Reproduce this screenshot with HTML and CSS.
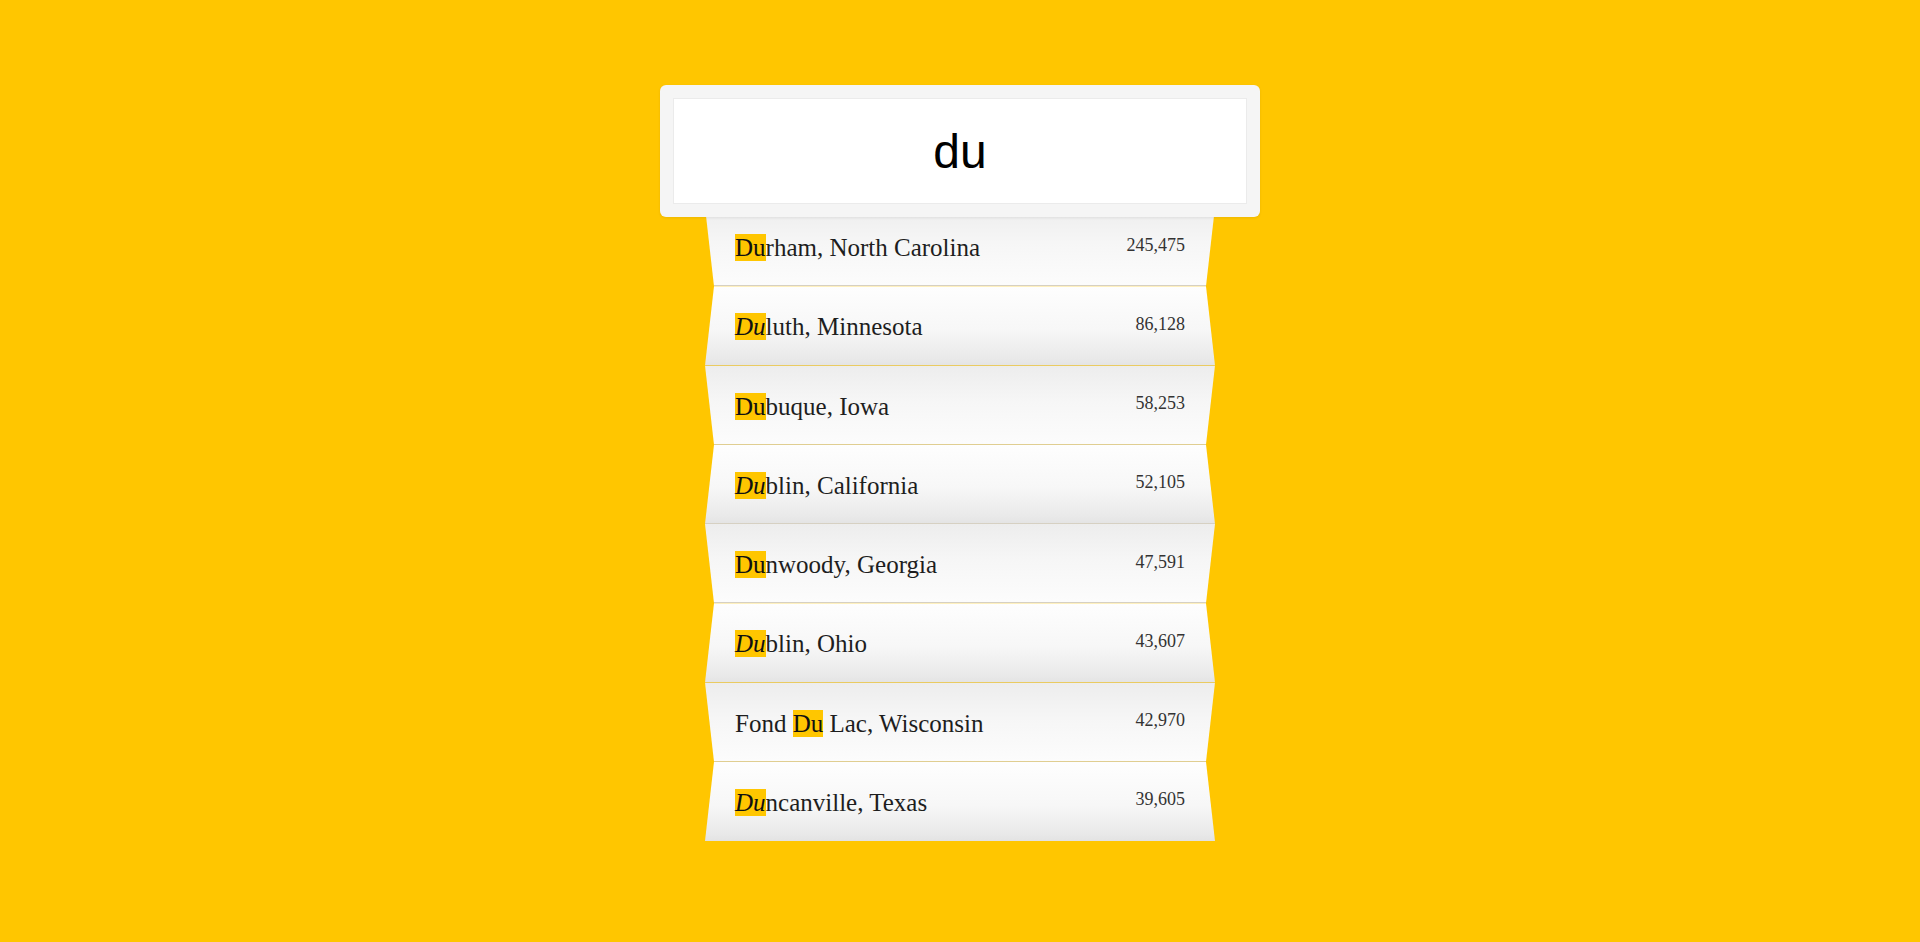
FILE: index.html
```html
<!DOCTYPE html>
<html lang="en">
<head>
<meta charset="utf-8">
<title>City search</title>
<link rel="stylesheet" href="styles.css">
</head>
<body>
<main class="page">
  <div class="search">
    <div class="search-input">du</div>
  </div>
  <ul class="results">
    <li class="row odd"><span class="name"><mark class="hl">Du</mark>rham, North Carolina</span><span class="pop">245,475</span></li>
    <li class="row even"><span class="name"><mark class="hl it">Du</mark>luth, Minnesota</span><span class="pop">86,128</span></li>
    <li class="row odd"><span class="name"><mark class="hl">Du</mark>buque, Iowa</span><span class="pop">58,253</span></li>
    <li class="row even"><span class="name"><mark class="hl it">Du</mark>blin, California</span><span class="pop">52,105</span></li>
    <li class="row odd"><span class="name"><mark class="hl">Du</mark>nwoody, Georgia</span><span class="pop">47,591</span></li>
    <li class="row even"><span class="name"><mark class="hl it">Du</mark>blin, Ohio</span><span class="pop">43,607</span></li>
    <li class="row odd"><span class="name">Fond <mark class="hl">Du</mark> Lac, Wisconsin</span><span class="pop">42,970</span></li>
    <li class="row even"><span class="name"><mark class="hl it">Du</mark>ncanville, Texas</span><span class="pop">39,605</span></li>
  </ul>
</main>
</body>
</html>
```
FILE: styles.css
```css
html, body {
  margin: 0;
  padding: 0;
}
body {
  background: #ffc600;
  min-height: 942px;
  font-family: "Liberation Serif", "Times New Roman", serif;
}
.page {
  display: flex;
  flex-direction: column;
  align-items: center;
  padding-top: 85px;
}
.search {
  position: relative;
  z-index: 2;
  width: 600px;
  box-sizing: border-box;
  padding: 13px;
  background: #f5f5f5;
  border-radius: 6px;
  box-shadow: 0 1px 3px rgba(0, 0, 0, 0.08);
}
.search-input {
  height: 106px;
  box-sizing: border-box;
  border: 1px solid #ebebeb;
  background: #fff;
  display: flex;
  align-items: center;
  justify-content: center;
  font-family: "Liberation Sans", Arial, sans-serif;
  font-size: 48px;
  color: #000;
}
.results {
  list-style: none;
  margin: -10px 0 0 0;
  padding: 0;
  width: 510px;
  position: relative;
  z-index: 1;
}
.row {
  height: 79.25px;
  box-sizing: border-box;
  display: flex;
  align-items: center;
  justify-content: space-between;
  padding: 4px 30px 0;
  border-bottom: 1px solid #d6d0c2;
}
.row.odd {
  clip-path: polygon(0 0, 100% 0, calc(100% - 9px) 100%, 9px 100%);
  background: linear-gradient(to bottom, #ededed 0%, #f6f6f6 45%, #fcfcfc 100%);
}
.row.even {
  clip-path: polygon(9px 0, calc(100% - 9px) 0, 100% 100%, 0 100%);
  background: linear-gradient(to bottom, #fefefe 0%, #f7f7f7 55%, #e9e9e9 92%, #e4e4e4 100%);
}
.row:last-child {
  border-bottom-color: #e2e2e2;
}
.name {
  font-size: 25px;
  color: #1e1e1e;
}
.pop {
  font-size: 18px;
  color: #333;
  position: relative;
  top: -3px;
}
.hl {
  background: #ffc600;
  color: #111;
}
.hl.it {
  font-style: italic;
}
```
